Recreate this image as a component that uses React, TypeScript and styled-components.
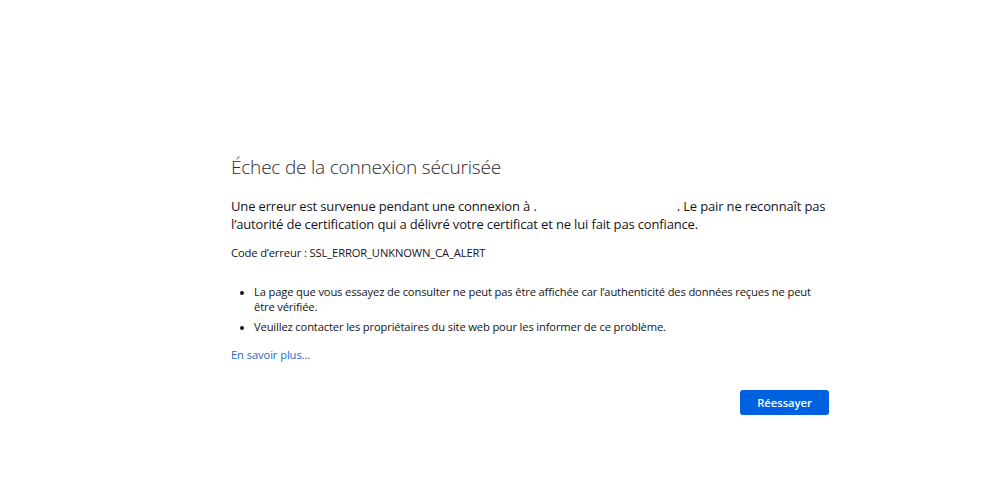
import React from "react";
import styled, { createGlobalStyle } from "styled-components";

const Global = createGlobalStyle`
  html, body { margin: 0; padding: 0; background: #ffffff; }
  body { font-family: "Open Sans", "Noto Sans", sans-serif; color: #15141a; }
`;

const Page = styled.main`
  min-height: 501px;
  box-sizing: border-box;
  padding-top: 152px;
`;

const Container = styled.div`
  width: 598px;
  margin: 0 auto;
  padding-left: 61px;
  box-sizing: content-box;
`;

const Title = styled.h1`
  margin: 0 0 15px;
  font-size: 19px;
  font-weight: 300;
  letter-spacing: -0.2px;
  line-height: 30px;
  color: #2b2a33;
`;

const Lead = styled.p`
  margin: 0 0 11px;
  font-size: 13px;
  letter-spacing: -0.15px;
  line-height: 18px;
`;

const Host = styled.span`
  margin-right: 140px;
`;

const Code = styled.p`
  margin: 0 0 22px;
  font-size: 11.2px;
  letter-spacing: -0.12px;
  line-height: 18px;
`;

const List = styled.ul`
  margin: 0 0 12px;
  padding-left: 23px;
  font-size: 11.2px;
  letter-spacing: -0.15px;
  line-height: 15px;
`;

const Item = styled.li`
  margin-bottom: 5px;
  &::marker { font-size: 10px; }
`;

const Link = styled.a`
  display: block;
  font-size: 11.2px;
  letter-spacing: -0.1px;
  line-height: 18px;
  color: #1a6ac9;
  text-decoration: none;
`;

const Actions = styled.div`
  display: flex;
  justify-content: flex-end;
  margin-top: 26px;
`;

const Button = styled.button`
  height: 25px;
  width: 89px;
  border: none;
  border-radius: 3px;
  background: #0061e0;
  color: #ffffff;
  font-family: "Open Sans", "Noto Sans", sans-serif;
  font-size: 11.2px;
  font-weight: 600;
  padding: 0;
`;

export default function App() {
  return (
    <>
      <Global />
      <Page>
        <Container>
          <Title>Échec de la connexion sécurisée</Title>
          <Lead>
            Une erreur est survenue pendant une connexion à <Host>.</Host>. Le pair ne reconnaît pas
            l’autorité de certification qui a délivré votre certificat et ne lui fait pas confiance.
          </Lead>
          <Code>Code d’erreur : SSL_ERROR_UNKNOWN_CA_ALERT</Code>
          <List>
            <Item>
              La page que vous essayez de consulter ne peut pas être affichée car l’authenticité des données reçues ne peut être vérifiée.
            </Item>
            <Item>Veuillez contacter les propriétaires du site web pour les informer de ce problème.</Item>
          </List>
          <Link href="#">En savoir plus…</Link>
          <Actions>
            <Button>Réessayer</Button>
          </Actions>
        </Container>
      </Page>
    </>
  );
}
